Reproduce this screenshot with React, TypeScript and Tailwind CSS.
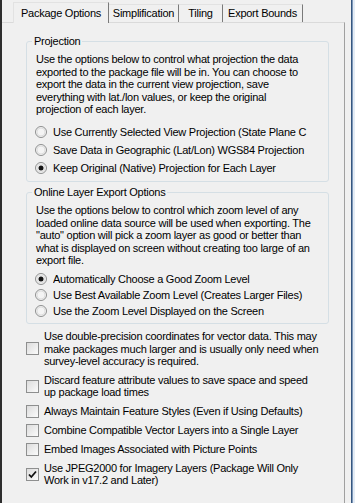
import React from "react";

const Radio = ({ checked = false }: { checked?: boolean }) => (
  <svg width="12" height="12" viewBox="0 0 12 12" className="shrink-0">
    <circle cx="6" cy="6" r="5.5" fill="#f4f4f4" stroke="#8e8f8f" />
    <circle cx="6" cy="6" r="4" fill="none" stroke="#dedede" />
    {checked && <circle cx="6" cy="6" r="2.5" fill="#151515" />}
  </svg>
);

const Check = ({ checked = false }: { checked?: boolean }) => (
  <div className="w-[13px] h-[13px] shrink-0 border border-[#8e8f8f] bg-[linear-gradient(135deg,#dcdcdc,#fbfbfb)] flex items-center justify-center">
    {checked && (
      <svg width="11" height="11" viewBox="0 0 11 11">
        <path d="M2 5.5 L4.3 8 L9 2.5" fill="none" stroke="#111" strokeWidth="1.8" />
      </svg>
    )}
  </div>
);

const Group = ({
  title,
  className,
  children,
}: {
  title: string;
  className?: string;
  children: React.ReactNode;
}) => (
  <div className={`relative border border-[#d5dfe5] rounded-[3px] ${className}`}>
    <span className="absolute left-[5px] top-[-7px] bg-[#f0f0f0] px-[2px] leading-[13px]">
      {title}
    </span>
    {children}
  </div>
);

const RadioRow = ({
  label,
  checked,
  h,
}: {
  label: string;
  checked?: boolean;
  h: string;
}) => (
  <div className={`flex items-center ${h} ml-[8px]`}>
    <Radio checked={checked} />
    <span className="ml-[6px] w-[256px] overflow-hidden whitespace-nowrap leading-[12.5px]">
      {label}
    </span>
  </div>
);

const CheckRow = ({ lines, checked }: { lines: string[]; checked?: boolean }) => (
  <div className="flex items-center">
    <Check checked={checked} />
    <div className="ml-[5px] leading-[12.5px] whitespace-nowrap">
      {lines.map((l) => (
        <div key={l}>{l}</div>
      ))}
    </div>
  </div>
);

const projText = [
  "Use the options below to control what projection the data",
  "exported to the package file will be in. You can choose to",
  "export the data in the current view projection, save",
  "everything with lat./lon values, or keep the original",
  "projection of each layer.",
];

const onlineText = [
  "Use the options below to control which zoom level of any",
  "loaded online data source will be used when exporting. The",
  "\"auto\" option will pick a zoom layer as good or better than",
  "what is displayed on screen without creating too large of an",
  "export file.",
];

export default function App() {
  return (
    <div className="w-[355px] h-[503px] bg-[#f0f0f0] flex overflow-hidden text-[11px] tracking-[-0.25px] text-black font-['Liberation_Sans',Arial,sans-serif]">
      <div className="w-[2px] shrink-0 bg-[#2e2e2e]" />

      <div className="w-[343px] shrink-0 flex flex-col">
        {/* tabs */}
        <div className="h-[22px] shrink-0 flex items-end pl-[11px]">
          <div className="relative z-10 -mb-px h-[21px] w-[96px] bg-[#f0f0f0] border-t border-l border-[#e2e2e2] border-r border-r-[#7a7a7a] flex items-center justify-center">
            Package Options
          </div>
          <div className="h-[18px] w-[70px] border-t border-[#e2e2e2] border-r border-r-[#7a7a7a] flex items-center justify-center">
            Simplification
          </div>
          <div className="h-[18px] w-[44px] border-t border-[#e2e2e2] border-r border-r-[#7a7a7a] flex items-center justify-center">
            Tiling
          </div>
          <div className="h-[18px] w-[80px] border-t border-[#e2e2e2] border-r border-r-[#7a7a7a] flex items-center justify-center">
            Export Bounds
          </div>
        </div>

        {/* panel */}
        <div className="flex-1 border-t border-[#dadada] border-r border-r-[#a0a0a0]">
          <div className="ml-[24px] w-[303px]">
            <Group title="Projection" className="mt-[18px] pt-[11px] pb-[4px]">
              <div className="pl-[9px] leading-[12.5px] whitespace-nowrap">
                {projText.map((l) => (
                  <div key={l}>{l}</div>
                ))}
              </div>
              <div className="mt-[7.5px]">
                <RadioRow h="h-[18px]" label="Use Currently Selected View Projection (State Plane C" />
                <RadioRow h="h-[18px]" label="Save Data in Geographic (Lat/Lon) WGS84 Projection" />
                <RadioRow h="h-[18px]" checked label="Keep Original (Native) Projection for Each Layer" />
              </div>
            </Group>

            <Group title="Online Layer Export Options" className="mt-[10px] pt-[11px] pb-[4px]">
              <div className="pl-[9px] leading-[12.5px] whitespace-nowrap">
                {onlineText.map((l) => (
                  <div key={l}>{l}</div>
                ))}
              </div>
              <div className="mt-[4.5px]">
                <RadioRow h="h-[16px]" checked label="Automatically Choose a Good Zoom Level" />
                <RadioRow h="h-[16px]" label="Use Best Available Zoom Level (Creates Larger Files)" />
                <RadioRow h="h-[16px]" label="Use the Zoom Level Displayed on the Screen" />
              </div>
            </Group>

            <div className="mt-[6px] flex flex-col gap-[6px]">
              <CheckRow
                lines={[
                  "Use double-precision coordinates for vector data. This may",
                  "make packages much larger and is usually only need when",
                  "survey-level accuracy is required.",
                ]}
              />
              <CheckRow
                lines={[
                  "Discard feature attribute values to save space and speed",
                  "up package load times",
                ]}
              />
              <CheckRow lines={["Always Maintain Feature Styles (Even if Using Defaults)"]} />
              <CheckRow lines={["Combine Compatible Vector Layers into a Single Layer"]} />
              <CheckRow lines={["Embed Images Associated with Picture Points"]} />
              <CheckRow
                checked
                lines={[
                  "Use JPEG2000 for Imagery Layers (Package Will Only",
                  "Work in v17.2 and Later)",
                ]}
              />
            </div>
          </div>
        </div>
      </div>

      <div className="w-[6px] shrink-0" />
      <div className="w-[1px] shrink-0 bg-[#35567f]" />
      <div className="w-[1px] shrink-0 bg-[#7d97b8]" />
      <div className="w-[2px] shrink-0 bg-[#e4ecf5]" />
    </div>
  );
}
